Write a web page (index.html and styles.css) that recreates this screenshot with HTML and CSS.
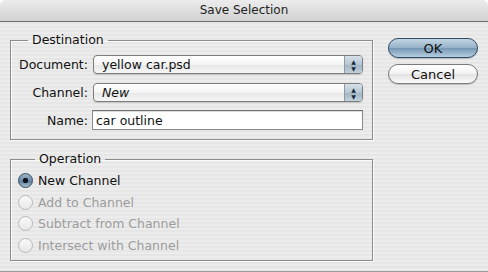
FILE: index.html
```html
<html lang="en">
  <head>
    <meta charset="UTF-8" />
    <link rel="stylesheet" href="styles.css">
    <title>Save Selection</title>
  </head>
  <body>
    <div class="dialog">
      <header class="titlebar">Save Selection</header>

      <main class="content">
        <div class="groups">
          <fieldset class="group destination">
            <legend>Destination</legend>
            <div class="form-grid">
              <label>Document:</label>
              <div class="popup">
                <span>yellow car.psd</span>
                <span class="arrows">&#9650;<br>&#9660;</span>
              </div>
              <label>Channel:</label>
              <div class="popup">
                <span class="italic">New</span>
                <span class="arrows">&#9650;<br>&#9660;</span>
              </div>
              <label>Name:</label>
              <input type="text" value="car outline" />
            </div>
          </fieldset>

          <fieldset class="group operation">
            <legend>Operation</legend>
            <div class="radio-row">
              <span class="radio checked"></span>New Channel
            </div>
            <div class="radio-row disabled">
              <span class="radio"></span>Add to Channel
            </div>
            <div class="radio-row disabled">
              <span class="radio"></span>Subtract from Channel
            </div>
            <div class="radio-row disabled">
              <span class="radio"></span>Intersect with Channel
            </div>
          </fieldset>
        </div>

        <div class="buttons">
          <button class="btn btn-default">OK</button>
          <button class="btn">Cancel</button>
        </div>
      </main>
    </div>
  </body>
</html>
```

FILE: styles.css
```css
*,
*::after,
*::before {
  margin: 0;
  padding: 0;
  box-sizing: border-box;
}

body {
  width: 488px;
  height: 272px;
  overflow: hidden;
  font-family: "DejaVu Sans", sans-serif;
  font-size: 12.5px;
  color: #111;
}

.dialog {
  height: 272px;
  border-radius: 6px 6px 0 0;
  border-bottom: 1px solid #9a9a9a;
  background: repeating-linear-gradient(
    to bottom,
    #ececec 0px,
    #ececec 2px,
    #e6e6e6 2px,
    #e6e6e6 4px
  );
}

.titlebar {
  height: 22px;
  line-height: 21px;
  text-align: center;
  font-size: 12px;
  color: #222;
  border-radius: 6px 6px 0 0;
  border-bottom: 1px solid #6e6e6e;
  background: linear-gradient(to bottom, #ececec, #d2d2d2);
}

.content {
  display: flex;
  padding: 11px 10px 0 10px;
}

.groups {
  width: 363px;
}

.group {
  border: 1px solid #8c8c8c;
  box-shadow: 1px 1px 0 #fafafa, inset 1px 1px 0 #fafafa;
}
.group legend {
  margin-left: 17px;
  padding: 0 4px;
  line-height: 14px;
}

.destination {
  padding: 8px 9px 9px 0;
}

.form-grid {
  display: grid;
  grid-template-columns: 77px 1fr;
  column-gap: 5px;
  row-gap: 9px;
  align-items: center;
}
.form-grid label {
  text-align: right;
  white-space: nowrap;
}

.popup {
  display: flex;
  align-items: center;
  height: 19px;
  border: 1px solid #7d7d7d;
  border-radius: 4px;
  background: linear-gradient(to bottom, #ffffff, #f4f4f4 50%, #e6e6e6 51%, #f6f6f6);
  box-shadow: 0 1px 1px rgba(0, 0, 0, 0.15);
  overflow: hidden;
}
.popup span:first-child {
  flex: 1;
  padding-left: 8px;
}
.popup .italic {
  font-style: italic;
}
.popup .arrows {
  width: 18px;
  height: 100%;
  border-left: 1px solid #8e9aa5;
  background: linear-gradient(to bottom, #d6e0e8, #b6c6d3 50%, #9fb3c3 51%, #c2d1dc);
  font-size: 6px;
  line-height: 7px;
  text-align: center;
  padding-top: 2px;
  color: #1b2a38;
}

.form-grid input {
  margin-top: -1px;
  margin-left: -1px;
  height: 20px;
  border: 1px solid #8a8a8a;
  border-top-color: #6e6e6e;
  background: #fff;
  font-family: "DejaVu Sans", sans-serif;
  font-size: 12.5px;
  padding: 0 3px;
  color: #111;
  box-shadow: inset 0 1px 1px rgba(0, 0, 0, 0.15);
}

.operation {
  margin-top: 12px;
  padding: 4px 0 4px 7px;
}

.radio-row {
  display: flex;
  align-items: center;
  gap: 5px;
  height: 21.5px;
  white-space: nowrap;
}
.radio-row.disabled {
  color: #9c9c9c;
}

.radio {
  width: 15px;
  height: 15px;
  border-radius: 50%;
  border: 1px solid #b8b8b8;
  background: linear-gradient(to bottom, #f8f8f8, #e8e8e8);
}
.radio.checked {
  border-color: #334a5e;
  background: radial-gradient(circle at 50% 50%, #0d1620 0, #0d1620 2.5px, transparent 3px),
    linear-gradient(to bottom, #9fb4c6, #6f8ca5 50%, #5a7a95 51%, #a9c0d2);
}

.buttons {
  display: flex;
  flex-direction: column;
  gap: 6px;
  margin-left: 15px;
  padding-top: 5px;
}

.btn {
  width: 90px;
  height: 20px;
  border-radius: 10px;
  border: 1px solid #7a7a7a;
  background: linear-gradient(to bottom, #ffffff, #f2f2f2 50%, #e2e2e2 51%, #fafafa);
  font-family: "DejaVu Sans", sans-serif;
  font-size: 13px;
  color: #111;
  box-shadow: 0 1px 1px rgba(0, 0, 0, 0.2);
}
.btn-default {
  border-color: #2f4b66;
  background: linear-gradient(to bottom, #c4d5e2, #94b1c8 50%, #7597b3 51%, #b5cde0);
}
```
